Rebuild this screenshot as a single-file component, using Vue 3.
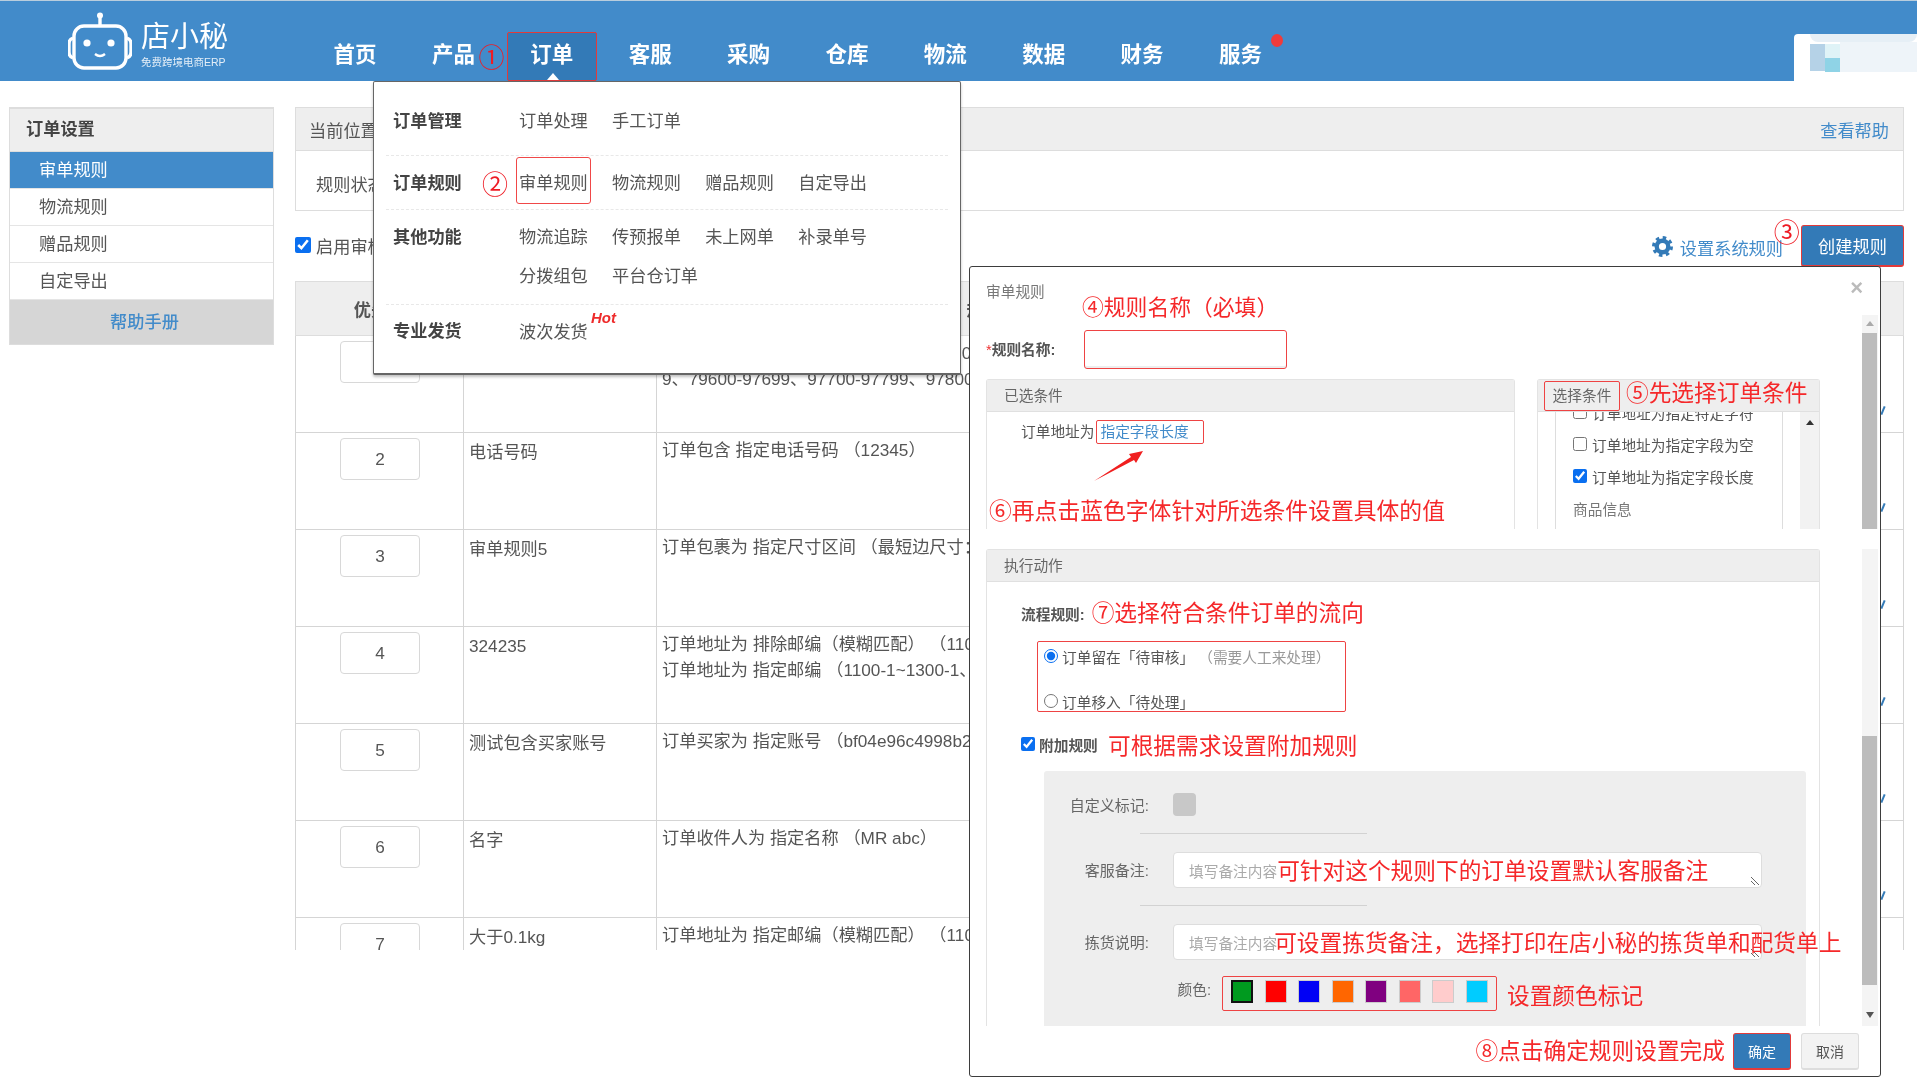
<script setup>
const navItems = ['首页', '产品', '订单', '客服', '采购', '仓库', '物流', '数据', '财务', '服务']
const sideItems = ['审单规则', '物流规则', '赠品规则', '自定导出']
const menu = [
  { label: '订单管理', cls: 'm1', rows: [['订单处理', '手工订单']] },
  { label: '订单规则', cls: 'm2', rows: [['审单规则', '物流规则', '赠品规则', '自定导出']] },
  { label: '其他功能', cls: 'm3', rows: [['物流追踪', '传预报单', '未上网单', '补录单号'], ['分拨组包', '平台仓订单']] },
  { label: '专业发货', cls: 'm4', rows: [['波次发货']] }
]
const rows = [
  { n: '', name: '', lines: ['订单地址为 指定邮编（模糊匹配）（00100-00199、79400-79499、79500-79599、', '9、79600-97699、97700-97799、97800-97899'] },
  { n: 2, name: '电话号码', lines: ['订单包含 指定电话号码 （12345）'] },
  { n: 3, name: '审单规则5', lines: ['订单包裹为 指定尺寸区间 （最短边尺寸：1-10cm）'] },
  { n: 4, name: '324235', lines: ['订单地址为 排除邮编（模糊匹配） （1100-1~1300-1）', '订单地址为 指定邮编 （1100-1~1300-1、1400-1）'] },
  { n: 5, name: '测试包含买家账号', lines: ['订单买家为 指定账号 （bf04e96c4998b2a1）'] },
  { n: 6, name: '名字', lines: ['订单收件人为 指定名称 （MR abc）'] },
  { n: 7, name: '大于0.1kg', lines: ['订单地址为 指定邮编（模糊匹配） （1100-1）'] }
]
const colors = ['#009a1f', '#ff0000', '#0000f5', '#ff6600', '#800080', '#ff6666', '#ffcccc', '#00ccff']
</script>

<template>
  <div class="page">
    <header class="topbar">
      <div class="logo">
        <svg class="robot" viewBox="0 0 64 58" width="64" height="58">
          <g fill="none" stroke="#fff" stroke-width="3.4">
            <rect x="6" y="14" width="52" height="42" rx="10" />
            <path d="M32 3v11M5 26c-3 1-4 3-4 6v8c0 3 1 5 4 6M59 26c3 1 4 3 4 6v8c0 3-1 5-4 6" />
          </g>
          <circle cx="32" cy="3.5" r="3" fill="#fff" />
          <circle cx="19" cy="31" r="3.6" fill="#fff" />
          <circle cx="43" cy="31" r="3.6" fill="#fff" />
          <path d="M27 42q5 4 10 0" fill="none" stroke="#fff" stroke-width="2.4" />
        </svg>
        <div class="brand">
          <div class="brand-name">店小秘</div>
          <div class="brand-sub">免费跨境电商ERP</div>
        </div>
      </div>
      <nav class="nav">
        <div v-for="item in navItems" :key="item" class="nav-item" :class="{ active: item === '订单' }">
          {{ item }}
          <i v-if="item === '服务'" class="dot"></i>
          <i v-if="item === '订单'" class="caret"></i>
          <span v-if="item === '产品'" class="step step1">①</span>
        </div>
      </nav>
      <div class="avatar">
        <i class="px a"></i><i class="px b"></i><i class="px c"></i><i class="px d"></i><i class="px e"></i>
      </div>
    </header>

    <div class="content">
      <aside class="side">
        <div class="side-head">订单设置</div>
        <div v-for="(s, i) in sideItems" :key="s" class="side-item" :class="{ on: i === 0 }">{{ s }}</div>
        <div class="side-help">帮助手册</div>
      </aside>

      <main class="main">
        <div class="crumb">
          <span>当前位置：订单设置</span>
          <a class="link">查看帮助</a>
        </div>
        <div class="filter">规则状态：</div>
        <div class="toolbar">
          <label class="enable"><input type="checkbox" checked />启用审核规则</label>
          <div class="tools">
            <svg class="gear" viewBox="0 0 24 24" width="21" height="21">
              <circle cx="12" cy="12" r="6.6" fill="none" stroke="#337ab7" stroke-width="5" />
              <circle cx="12" cy="12" r="10.2" fill="none" stroke="#337ab7" stroke-width="3.6" stroke-dasharray="4 4" />
            </svg>
            <a class="link sys">设置系统规则</a>
            <span class="step step3">③</span>
            <button class="create">创建规则</button>
          </div>
        </div>
        <div class="table-wrap">
          <table class="rules">
            <colgroup><col class="c0" /><col class="c1" /><col class="c2" /><col /></colgroup>
            <thead>
              <tr><th>优先级</th><th>规则名称</th><th>规则条件</th><th>操作</th></tr>
            </thead>
            <tbody>
              <tr v-for="r in rows" :key="r.n">
                <td><div class="num">{{ r.n }}</div></td>
                <td class="name">{{ r.name }}</td>
                <td class="cond"><div class="clip"><div v-for="l in r.lines" :key="l" class="ln">{{ l }}</div></div></td>
                <td class="act"><i class="edit"></i></td>
              </tr>
            </tbody>
          </table>
        </div>
      </main>
    </div>

    <div class="dropdown">
      <div v-for="g in menu" :key="g.label" class="group" :class="g.cls">
        <div class="g-label">{{ g.label }}</div>
        <div class="g-rows">
          <div v-for="(row, ri) in g.rows" :key="ri" class="g-row">
            <span v-for="it in row" :key="it" class="g-item" :class="{ boxed: g.cls === 'm2' && it === '审单规则' }">
              {{ it }}
              <em v-if="it === '波次发货'" class="hot">Hot</em>
              <span v-if="g.cls === 'm2' && it === '审单规则'" class="step step2">②</span>
            </span>
          </div>
        </div>
      </div>
    </div>

    <section class="modal">
      <div class="m-title">
        <span>审单规则</span>
        <span class="close">×</span>
      </div>
      <div class="m-body">
        <div class="scrollbar">
          <i class="up"></i><i class="thumb t1"></i><i class="thumb t2"></i><i class="down"></i>
        </div>
        <div class="name-row">
          <span class="name-label"><b class="star">*</b>规则名称:</span>
          <div class="name-input"></div>
          <span class="note n4">④规则名称（必填）</span>
        </div>
        <div class="cond-row">
          <div class="panel left">
            <div class="p-head">已选条件</div>
            <div class="p-body">
              <span>订单地址为</span><span class="picked">指定字段长度</span>
              <svg class="arrow" viewBox="0 0 52 32" width="52" height="32">
                <path d="M1 31 38 7l-2-3 14-3-7 12-2-3z" fill="#f01f1f" />
              </svg>
              <div class="note n6">⑥再点击蓝色字体针对所选条件设置具体的值</div>
            </div>
          </div>
          <div class="panel right">
            <div class="p-head choose">
              <span class="choose-btn">选择条件</span>
              <span class="note n5">⑤先选择订单条件</span>
            </div>
            <div class="pick-wrap">
              <div class="pick-list">
                <label class="pick"><input type="checkbox" />订单地址为指定特定字符</label>
                <label class="pick"><input type="checkbox" />订单地址为指定字段为空</label>
                <label class="pick"><input type="checkbox" checked />订单地址为指定字段长度</label>
                <div class="pick grey">商品信息</div>
                <label class="pick"><input type="checkbox" />订单商品为指定商品</label>
              </div>
              <div class="pick-side"><i class="tri"></i></div>
            </div>
          </div>
        </div>
        <div class="panel action">
          <div class="p-head">执行动作</div>
          <div class="a-body">
            <div class="flow"><b>流程规则:</b><span class="note n7">⑦选择符合条件订单的流向</span></div>
            <div class="radios">
              <label class="radio"><input type="radio" name="f" checked />订单留在「待审核」<span class="muted">（需要人工来处理）</span></label>
              <label class="radio"><input type="radio" name="f" />订单移入「待处理」</label>
            </div>
            <div class="extra">
              <label><input type="checkbox" checked /><b>附加规则</b></label>
              <span class="note n8">可根据需求设置附加规则</span>
            </div>
            <div class="greybox">
              <div class="g-line tag-line"><span class="g-lab">自定义标记:</span><i class="tag"></i></div>
              <div class="g-hr"></div>
              <div class="g-line area-line">
                <span class="g-lab">客服备注:</span>
                <div class="area"><span class="ph">填写备注内容</span><span class="note">可针对这个规则下的订单设置默认客服备注</span><i class="grip"></i></div>
              </div>
              <div class="g-hr"></div>
              <div class="g-line area-line second">
                <span class="g-lab">拣货说明:</span>
                <div class="area"><span class="ph">填写备注内容</span><span class="note tight">可设置拣货备注，选择打印在店小秘的拣货单和配货单上</span><i class="grip"></i></div>
              </div>
              <div class="g-line color-line">
                <span class="c-lab">颜色:</span>
                <div class="swatches">
                  <i v-for="(c, i) in colors" :key="c" class="sw" :class="{ sel: i === 0 }" :style="{ background: c }"></i>
                </div>
                <span class="note">设置颜色标记</span>
              </div>
            </div>
          </div>
        </div>
      </div>
      <div class="m-foot">
        <span class="note">⑧点击确定规则设置完成</span>
        <button class="ok">确定</button>
        <button class="cancel">取消</button>
      </div>
    </section>
  </div>
</template>

<style scoped>
.page {
  position: relative;
  width: 1917px;
  height: 1080px;
  overflow: hidden;
  background: #fff;
  color: #555;
  font-family: "Liberation Sans", "Noto Sans CJK SC", sans-serif;
  font-size: 17.2px;
  filter: blur(0.45px);
}
i, em { display: block; }
input { margin: 0; accent-color: #0a6ff0; }

/* top bar */
.topbar {
  display: flex;
  height: 81px;
  background: #428bca;
  border-top: 1px solid #b9cddd;
  box-sizing: border-box;
}
.logo { display: flex; width: 310px; padding: 11px 0 0 68px; box-sizing: border-box; color: #fff; }
.robot { flex: none; }
.brand { margin-left: 9px; margin-top: 10px; }
.brand-name { font-size: 29px; line-height: 30px; font-weight: 400; }
.brand-sub { font-size: 10.5px; line-height: 12px; margin-top: 4px; opacity: .85; }
.nav { display: flex; gap: 8.4px; padding-top: 31px; }
.nav-item {
  position: relative;
  width: 90px;
  height: 49px;
  box-sizing: border-box;
  padding-top: 9px;
  text-align: center;
  color: #fff;
  font-size: 21.5px;
  font-weight: 700;
  line-height: 29px;
}
.nav-item.active { background: #337ab7; border: 1px solid #e23a3a; border-radius: 2px; padding-top: 8px; }
.caret {
  position: absolute; left: 39px; bottom: 0;
  border: 6px solid transparent; border-bottom: 7px solid #fff; border-top: 0;
}
.dot { position: absolute; left: 75px; top: 2px; width: 12px; height: 13px; border-radius: 50%; background: #ef3b3b; }
.step { position: absolute; color: #ee1c25; font-weight: 400; font-size: 26px; line-height: 30px; }
.step1 { left: 70px; top: 11px; }
.avatar { position: relative; margin-left: auto; width: 123px; margin-top: 33px; background: #fff; border-radius: 4px 0 0 0; }
.px { position: absolute; }
.px.a { left: 16px; top: 10px; width: 15px; height: 27px; background: #b5d2e7; }
.px.b { left: 31px; top: 10px; width: 15px; height: 14px; background: #dff3f7; }
.px.c { left: 31px; top: 24px; width: 15px; height: 14px; background: #8fd3e6; }
.px.d { left: 46px; top: 8px; width: 77px; height: 30px; background: #eef4f9; }
.px.e { left: 16px; top: 0; width: 107px; height: 8px; background: #e6eff6; border-radius: 0 0 30px 30px; }

/* layout */
.content { display: flex; gap: 21px; padding: 26px 13px 0 9px; }
.side { width: 265px; flex: none; border: 1px solid #ddd; border-top: 2px solid #ddd; box-sizing: border-box; height: 238px; }
.side-head { height: 42px; line-height: 41px; background: #eee; padding-left: 16px; font-weight: 700; color: #444; border-bottom: 1px solid #ddd; }
.side-item { height: 37px; line-height: 36px; padding-left: 29px; color: #555; border-bottom: 1px solid #e5e5e5; box-sizing: border-box; }
.side-item.on { background: #428bca; color: #fff; }
.side-help { height: 44px; line-height: 44px; background: #d6d6d6; text-align: center; padding-left: 6px; box-sizing: border-box; color: #428bca; font-weight: 500; }
.main { flex: 1; min-width: 0; }
.crumb {
  display: flex; justify-content: space-between; align-items: center;
  height: 44px; background: #eee; border: 1px solid #ddd; box-sizing: border-box; padding: 0 14px 0 13px;
}
.link { color: #428bca; }
.filter { height: 60px; border: 1px solid #ddd; border-top: 0; box-sizing: border-box; padding: 22px 0 0 20px; line-height: 24px; }
.toolbar { display: flex; justify-content: space-between; align-items: center; height: 70px; padding-bottom: 1px; box-sizing: border-box; }
.enable { display: flex; align-items: center; gap: 5px; margin-top: -1px; }
.enable input { width: 16px; height: 16px; }
.tools { position: relative; display: flex; align-items: center; }
.gear { margin-right: 7px; margin-top: 1px; }
.sys { margin-right: 18px; margin-top: 3px; }
.step3 { left: 122px; top: -7px; }
.create { width: 103px; height: 42px; background: #337ab7; color: #fff; border: 1px solid #e23a3a; border-bottom-width: 2px; border-radius: 3px; font: inherit; }
.table-wrap { height: 669px; overflow: hidden; }
.rules { width: 100%; border-collapse: collapse; table-layout: fixed; }
.c0 { width: 168px; } .c1 { width: 193px; } .c2 { width: 689px; }
.rules th { height: 51px; background: #eee; border: 1px solid #ddd; color: #555; font-weight: 700; font-size: 17.2px; }
.rules td { height: 97px; padding: 0; border: 1px solid #d5d5d5; vertical-align: top; box-sizing: border-box; }
.num { width: 80px; height: 42px; margin: 5px 0 0 44px; border: 1px solid #d8d8d8; border-radius: 4px; text-align: center; line-height: 40px; box-sizing: border-box; }
.name { padding: 6px 5px 0 !important; line-height: 26px; }
.cond { padding: 4px 0 0 5px !important; }
.clip { width: 320px; white-space: nowrap; }
.ln { line-height: 26px; }
.act { position: relative; }
.edit { position: absolute; left: 536px; top: 70px; width: 2px; height: 9px; background: #337ab7; transform: rotate(22deg); }

/* dropdown */
.dropdown {
  position: absolute; left: 373px; top: 81px; width: 588px; height: 294px; box-sizing: border-box;
  background: #fff; border: 1px solid #666; border-bottom-width: 2px; border-radius: 2px;
  box-shadow: 0 2px 3px rgba(0,0,0,.25); padding: 0 12px;
}
.group { display: flex; border-bottom: 1px dashed #e8e8e8; color: #555; }
.m1 { height: 74px; padding-top: 26px; box-sizing: border-box; }
.m2 { height: 54px; padding-top: 14px; box-sizing: border-box; }
.m3 { height: 95px; padding-top: 14px; box-sizing: border-box; }
.m4 { border-bottom: 0; padding-top: 13px; }
.g-label { width: 133px; padding-left: 7px; box-sizing: border-box; font-weight: 700; color: #444; line-height: 26px; flex: none; }
.g-row { display: flex; gap: 24.3px; height: 39px; line-height: 26px; align-items: flex-start; }
.m4 .g-row { padding-top: 1px; }
.g-item { position: relative; }
.boxed::before { content: ""; position: absolute; left: -3px; right: -3px; top: -13px; height: 47px; border: 1px solid #f04848; border-radius: 3px; box-sizing: border-box; }
.step2 { left: -37px; top: 0; }
.hot { position: absolute; left: 72px; top: -10px; font-size: 15px; line-height: 18px; font-weight: 700; font-style: italic; color: #ee2b2b; }

/* modal */
.modal {
  position: absolute; left: 969px; top: 266px; width: 912px; height: 811px; box-sizing: border-box;
  background: #fff; border: 1px solid #3d3d3d; border-radius: 3px; display: flex; flex-direction: column;
  font-size: 14.7px;
}
.m-title { display: flex; justify-content: space-between; height: 48px; box-sizing: border-box; padding: 14px 17px 0 16px; color: #777; line-height: 22px; flex: none; }
.close { font-size: 22px; font-weight: 700; color: #bbb; line-height: 14px; }
.m-body { position: relative; flex: none; height: 711px; padding-left: 16px; box-sizing: border-box; }
.scrollbar { position: absolute; right: 2px; top: 0; width: 16px; bottom: 0; background: #f4f4f4; }
.thumb { position: absolute; left: 0; right: 1px; background: #bcbcbc; }
.t1 { top: 18px; height: 196px; }
.t2 { top: 421px; height: 249px; }
.scrollbar::before { content: ""; position: absolute; left: -2px; right: -2px; top: 214px; height: 20px; background: #fff; }
.up, .down { position: absolute; left: 4px; border: 4px solid transparent; }
.up { top: 6px; border-bottom: 5px solid #aaa; border-top: 0; }
.down { top: 697px; border-top: 6px solid #555; border-bottom: 0; }
.note { color: #f5282a; font-size: 22.7px; line-height: 30px; white-space: nowrap; font-weight: 400; flex: none; }
.name-row { position: relative; display: flex; align-items: center; height: 39px; margin-top: 15px; }
.name-label { width: 98px; font-weight: 700; color: #555; flex: none; margin-top: -2px; }
.star { color: #e33; font-weight: 400; }
.name-input { width: 203px; height: 39px; border: 1px solid #ee4343; border-radius: 3px; box-sizing: border-box; box-shadow: inset 0 -2px 0 #eee; }
.n4 { position: absolute; left: 96px; top: -37px; font-size: 21.8px; }
.cond-row { display: flex; gap: 22px; height: 150px; margin-top: 10px; overflow: hidden; }
.panel { border: 1px solid #e3e3e3; border-bottom: 0; border-radius: 3px 3px 0 0; box-sizing: border-box; }
.left { width: 529px; }
.right { width: 283px; }
.p-head { height: 32px; line-height: 32px; background: #eee; padding-left: 17px; color: #666; box-sizing: border-box; border-bottom: 1px solid #e0e0e0; }
.p-body { position: relative; padding: 8px 0 0 34px; line-height: 24px; color: #555; height: 100px; }
.picked { display: inline-block; height: 24px; line-height: 22px; padding: 0 3px; width: 108px; box-sizing: border-box; border: 1px solid #ee4343; border-radius: 2px; color: #428bca; vertical-align: top; margin-left: 2px; }
.arrow { position: absolute; left: 106px; top: 38px; }
.n6 { position: absolute; left: 2px; top: 84px; font-size: 22.8px; }
.choose { position: relative; padding-left: 0; display: flex; overflow: visible; }
.choose-btn { margin-left: 6px; margin-top: 1px; width: 76px; height: 30px; text-align: center; line-height: 28px; border: 1px solid #ee4343; border-radius: 2px; box-sizing: border-box; background: #eee; }
.n5 { margin-left: 6px; margin-top: -2px; }
.pick-wrap { display: flex; height: 118px; overflow: hidden; }
.pick-list { margin-left: 17px; width: 228px; box-sizing: border-box; border-left: 1px solid #ddd; border-right: 1px solid #ddd; padding-left: 17px; margin-top: -16px; height: 140px; flex: none; }
.pick { display: flex; align-items: center; gap: 5px; height: 32px; color: #555; white-space: nowrap; }
.pick input { width: 14px; height: 14px; }
.grey { color: #777; }
.pick-side { flex: 1; margin-left: 17px; background: #f2f2f2; position: relative; }
.tri { position: absolute; left: 6px; top: 8px; border: 4px solid transparent; border-bottom: 5px solid #333; border-top: 0; }
.action { width: 834px; height: 477px; margin-top: 20px; }
.a-body { padding-left: 34px; color: #555; }
.flow { display: flex; align-items: center; gap: 7px; height: 32px; margin-top: 15px; }
.flow .n7 { margin-top: 0; }
.radios { display: flex; flex-direction: column; gap: 25px; width: 309px; height: 71px; margin: 12px 0 0 16px; padding: 4px 0 0 6px; box-sizing: border-box; border: 1px solid #ee4343; border-radius: 2px; }
.radio { display: flex; align-items: center; height: 20px; gap: 4px; white-space: nowrap; }
.radio input { width: 14px; height: 14px; }
.muted { color: #999; margin-left: 0; }
.extra { display: flex; align-items: center; height: 34px; margin-top: 15px; }
.extra label { display: flex; align-items: center; gap: 3px; width: 87px; flex: none; }
.extra b { margin-left: 1px; }
.extra input { width: 14px; height: 14px; }
.n8 { margin-top: 3px; }
.greybox { width: 762px; height: 255px; margin: 10px 0 0 23px; background: #eee; border-radius: 3px 3px 0 0; padding-top: 22px; box-sizing: border-box; }
.g-line { display: flex; align-items: center; }
.g-lab { width: 105px; text-align: right; flex: none; margin-right: 24px; color: #666; font-size: 15px; }
.tag { width: 23px; height: 23px; background: #c8c8c8; border-radius: 4px; }
.g-hr { width: 227px; height: 1px; margin: 17px 0 0 96px; background: #d2d2d2; }
.area-line { margin-top: 18px; }
.area-line .g-lab { margin-top: -1px; }
.area { position: relative; display: flex; align-items: center; width: 589px; height: 36px; background: #fff; border: 1px solid #ddd; border-radius: 4px; padding-left: 15px; box-sizing: border-box; }
.area .note { margin-top: 2px; }
.ph { color: #aaa; flex: none; white-space: nowrap; }
.tight { margin-left: -3px; position: relative; z-index: 1; }
.grip { position: absolute; right: 2px; bottom: 2px; width: 8px; height: 8px; background: linear-gradient(135deg, transparent 45%, #666 45%, #666 55%, transparent 55%, transparent 70%, #666 70%, #666 80%, transparent 80%); transform: scaleX(-1); }
.color-line { margin-top: 16px; }
.c-lab { width: 167px; text-align: right; margin-right: 11px; color: #666; flex: none; margin-top: -10px; }
.swatches { display: flex; gap: 11.6px; width: 275px; height: 35px; padding: 3px 8px 0; box-sizing: border-box; border: 1px solid #ee4343; border-radius: 2px; flex: none; }
.sw { width: 22.6px; height: 23px; box-sizing: border-box; border: 1px solid #ccc; }
.sw.sel { border: 2px solid #111; }
.color-line .note { margin-left: 10px; margin-top: 4px; }
.m-foot { display: flex; align-items: center; justify-content: flex-end; gap: 10px; padding-right: 21px; height: 50px; box-sizing: border-box; }
.m-foot .note { margin-right: -2px; }
.ok, .cancel { width: 58px; height: 37px; border-radius: 3px; font: inherit; font-size: 14px; }
.ok { background: #337ab7; color: #fff; border: 1px solid #e23a3a; border-bottom-width: 2px; }
.cancel { background: #f3f3f3; color: #555; border: 1px solid #ddd; border-bottom-width: 2px; }
</style>
